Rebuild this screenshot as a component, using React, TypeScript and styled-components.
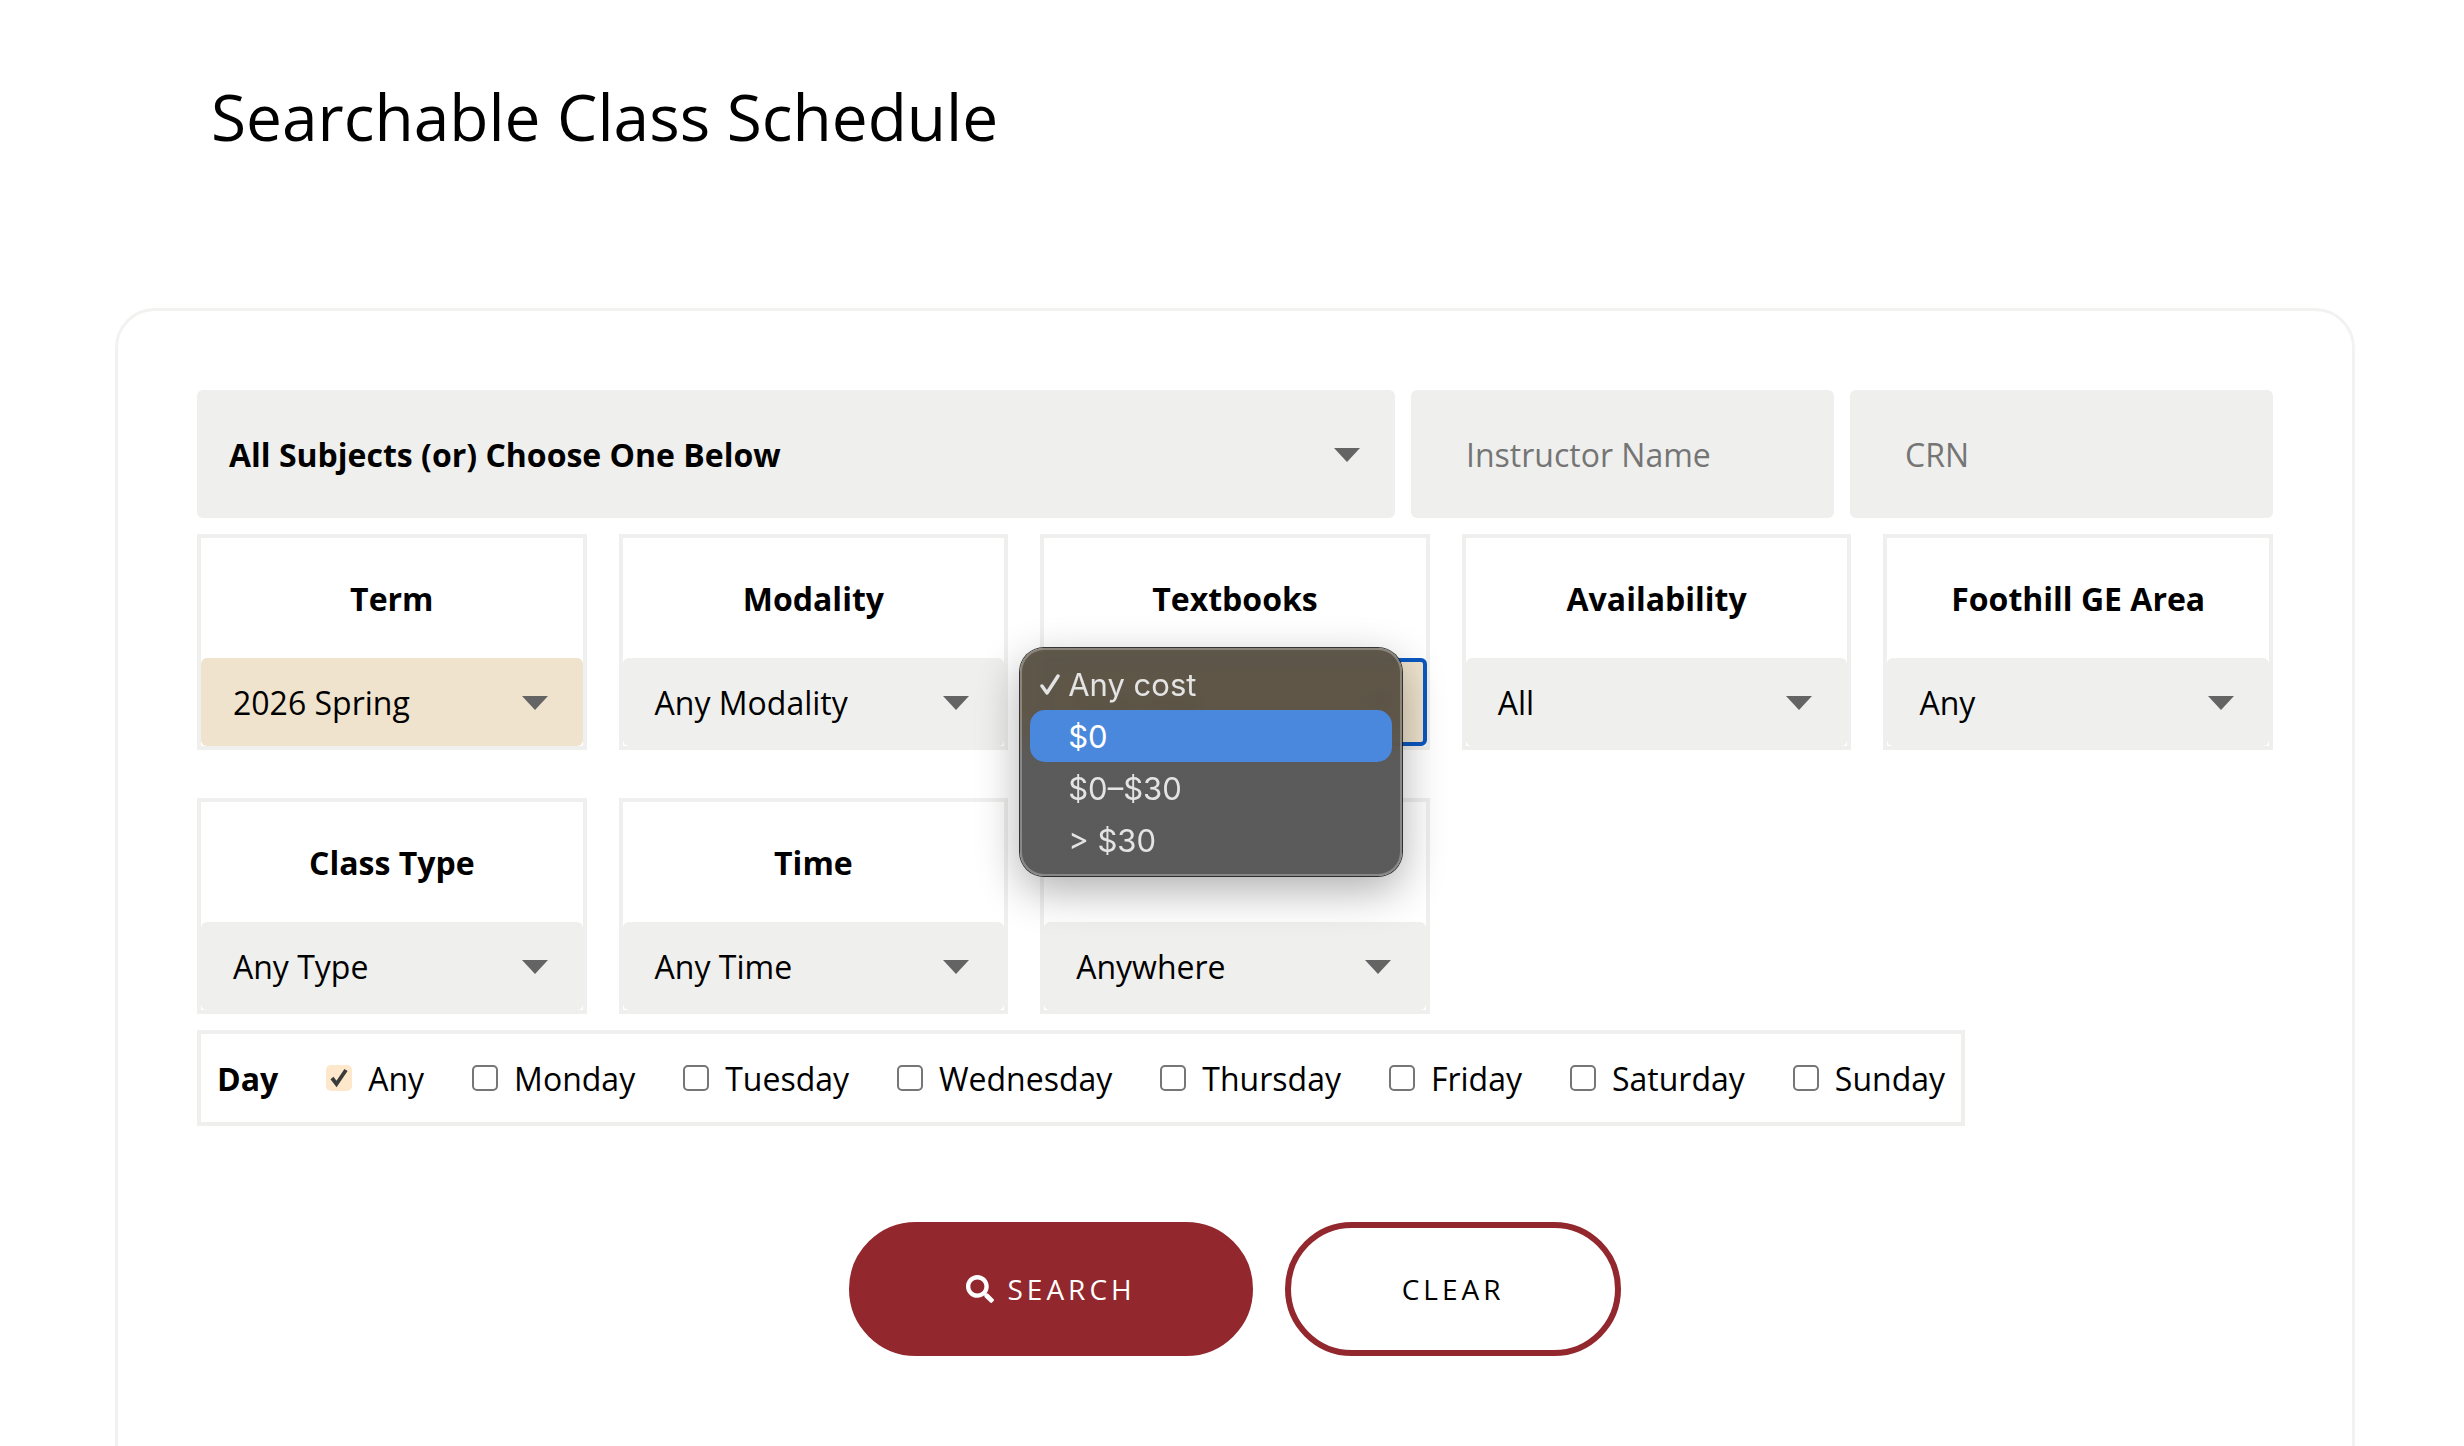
import styled, { createGlobalStyle } from "styled-components";
import { FaSearch } from "react-icons/fa";

const GlobalStyle = createGlobalStyle`
  html, body {
    margin: 0;
    padding: 0;
    background: #fff;
    color: #000;
    font-family: "Open Sans", "Liberation Sans", sans-serif;
  }
`;

const Page = styled.div`
  height: 100vh;
  overflow: hidden;
  padding: 0 109px 0 115px;
  box-sizing: border-box;
`;

const Title = styled.h1`
  margin: 0;
  padding: 73px 0 0 96px;
  height: 308px;
  box-sizing: border-box;
  font-size: 64px;
  line-height: 88px;
  font-weight: 400;
`;

const Panel = styled.div`
  box-sizing: border-box;
  border: 3px solid #f2f2f0;
  border-radius: 40px;
  padding: 79px 79px 240px;
`;

const SearchRow = styled.div`
  display: grid;
  grid-template-columns: 1fr 423px 423px;
  gap: 16px;
  margin-bottom: 16px;
`;

const SubjectSelect = styled.div`
  height: 128px;
  border-radius: 6px;
  background: #efefed;
  padding: 0 35px 0 32px;
  display: flex;
  align-items: center;
  justify-content: space-between;
  font-size: 32px;
  font-weight: 700;
`;

const TextInput = styled.input`
  box-sizing: border-box;
  width: 100%;
  height: 128px;
  border: 0;
  border-radius: 6px;
  background: #efefed;
  padding: 0 32px 0 55px;
  font-family: inherit;
  font-size: 32px;
  color: #000;

  &::placeholder {
    color: #757575;
    opacity: 1;
  }
`;

const FilterGrid = styled.div`
  display: grid;
  grid-template-columns: repeat(5, 1fr);
  column-gap: 32px;
  row-gap: 48px;
`;

const Card = styled.div`
  position: relative;
  box-sizing: border-box;
  height: 216px;
  border: 4px solid #efefed;
  display: flex;
  flex-direction: column;
`;

const CardLabel = styled.div`
  height: 120px;
  display: flex;
  align-items: center;
  justify-content: center;
  font-size: 32px;
  font-weight: 700;
`;

const SelectBox = styled.div<{ $active?: boolean; $focused?: boolean }>`
  box-sizing: border-box;
  flex: 1;
  display: flex;
  align-items: center;
  justify-content: space-between;
  margin-right: ${(p) => (p.$focused ? "-1px" : "0")};
  padding: 0 ${(p) => (p.$focused ? "31px" : "35px")} 0 ${(p) => (p.$focused ? "28px" : "32px")};
  border-radius: 6px;
  background: ${(p) => (p.$active ? "#efe3cd" : "#efefed")};
  border: ${(p) => (p.$focused ? "4px solid #0b57c0" : "0")};
  font-size: 32px;
`;

const Arrow = styled.svg`
  width: 26px;
  height: 14px;
  flex: none;
  margin-top: 2px;
  fill: #646464;
`;

const Popup = styled.div`
  position: absolute;
  z-index: 5;
  left: -24px;
  top: 110px;
  width: 382px;
  box-sizing: border-box;
  padding: 10px;
  border-radius: 24px;
  background: linear-gradient(
    rgba(88, 80, 66, 0.96) 0,
    rgba(88, 80, 66, 0.96) 66px,
    rgba(84, 84, 84, 0.96) 116px
  );
  backdrop-filter: blur(8px);
  box-shadow:
    0 0 0 1px rgba(20, 20, 20, 0.85),
    inset 0 0 0 2px rgba(255, 255, 255, 0.28),
    0 14px 44px rgba(0, 0, 0, 0.32);
  font-family: Inter, "Liberation Sans", sans-serif;
  font-size: 31px;
`;

const PopupItem = styled.div<{ $highlight?: boolean }>`
  position: relative;
  height: 52px;
  display: flex;
  align-items: center;
  padding-left: 38px;
  border-radius: 15px;
  background: ${(p) => (p.$highlight ? "#4a88de" : "transparent")};
  color: ${(p) => (p.$highlight ? "#fff" : "#e4e4e4")};
`;

const PopupCheck = styled.svg`
  position: absolute;
  left: 10px;
  top: 16px;
  width: 20px;
  height: 21px;
  fill: none;
  stroke: #e4e4e4;
  stroke-width: 3.4;
  stroke-linecap: round;
  stroke-linejoin: round;
`;

const DayRow = styled.div`
  box-sizing: border-box;
  width: fit-content;
  height: 96px;
  margin-top: 16px;
  padding: 0 16px 0 16px;
  border: 4px solid #efefed;
  display: flex;
  align-items: center;
  gap: 48px;
  font-size: 32px;
`;

const DayLabel = styled.span`
  font-weight: 700;
`;

const DayOption = styled.label`
  display: flex;
  align-items: center;
  gap: 16px;
`;

const CheckBox = styled.span<{ $checked?: boolean }>`
  box-sizing: border-box;
  width: 26px;
  height: 26px;
  border-radius: 5px;
  border: ${(p) => (p.$checked ? "0" : "2px solid #767676")};
  background: ${(p) => (p.$checked ? "#fde8cc" : "#fff")};
  display: flex;
  align-items: center;
  justify-content: center;

  svg {
    width: 20px;
    height: 20px;
    fill: none;
    stroke: #3b3b3b;
    stroke-width: 3.8;
  }
`;

const Actions = styled.div`
  margin-top: 96px;
  display: flex;
  justify-content: center;
  gap: 32px;
`;

const Button = styled.button<{ $outline?: boolean }>`
  box-sizing: border-box;
  height: 134px;
  padding: 0 111px;
  border-radius: 67px;
  border: 6px solid #92272d;
  background: ${(p) => (p.$outline ? "#fff" : "#92272d")};
  color: ${(p) => (p.$outline ? "#000" : "#fff")};
  display: flex;
  align-items: center;
  gap: 14px;
  font-family: inherit;
  font-size: 28px;
  letter-spacing: 4px;

  svg {
    width: 28px;
    height: 28px;
  }
`;

const ArrowIcon = () => (
  <Arrow viewBox="0 0 26 14">
    <path d="M0 0h26L13 14z" />
  </Arrow>
);

const filters = [
  { label: "Term", value: "2026 Spring", active: true },
  { label: "Modality", value: "Any Modality" },
  { label: "Textbooks", value: "Any cost", active: true, focused: true, popup: true },
  { label: "Availability", value: "All" },
  { label: "Foothill GE Area", value: "Any" },
  { label: "Class Type", value: "Any Type" },
  { label: "Time", value: "Any Time" },
  { label: "", value: "Anywhere" },
];

const days = ["Monday", "Tuesday", "Wednesday", "Thursday", "Friday", "Saturday", "Sunday"];

const App = () => {
  return (
    <Page>
      <GlobalStyle />
      <Title>Searchable Class Schedule</Title>
      <Panel>
        <SearchRow>
          <SubjectSelect>
            All Subjects (or) Choose One Below
            <ArrowIcon />
          </SubjectSelect>
          <TextInput placeholder="Instructor Name" />
          <TextInput placeholder="CRN" />
        </SearchRow>
        <FilterGrid>
          {filters.map((f) => (
            <Card key={f.value}>
              <CardLabel>{f.label}</CardLabel>
              <SelectBox $active={f.active} $focused={f.focused}>
                {f.value}
                <ArrowIcon />
              </SelectBox>
              {f.popup && (
                <Popup>
                  <PopupItem>
                    <PopupCheck viewBox="0 0 20 21">
                      <path d="M2 12l5 7L18 2" />
                    </PopupCheck>
                    Any cost
                  </PopupItem>
                  <PopupItem $highlight>$0</PopupItem>
                  <PopupItem>$0–$30</PopupItem>
                  <PopupItem>&gt; $30</PopupItem>
                </Popup>
              )}
            </Card>
          ))}
        </FilterGrid>
        <DayRow>
          <DayLabel>Day</DayLabel>
          <DayOption>
            <CheckBox $checked>
              <svg viewBox="0 0 20 20">
                <path d="M3 10l4.5 6L17 2" />
              </svg>
            </CheckBox>
            Any
          </DayOption>
          {days.map((d) => (
            <DayOption key={d}>
              <CheckBox />
              {d}
            </DayOption>
          ))}
        </DayRow>
        <Actions>
          <Button>
            <FaSearch />
            SEARCH
          </Button>
          <Button $outline>CLEAR</Button>
        </Actions>
      </Panel>
    </Page>
  );
};

export default App;
